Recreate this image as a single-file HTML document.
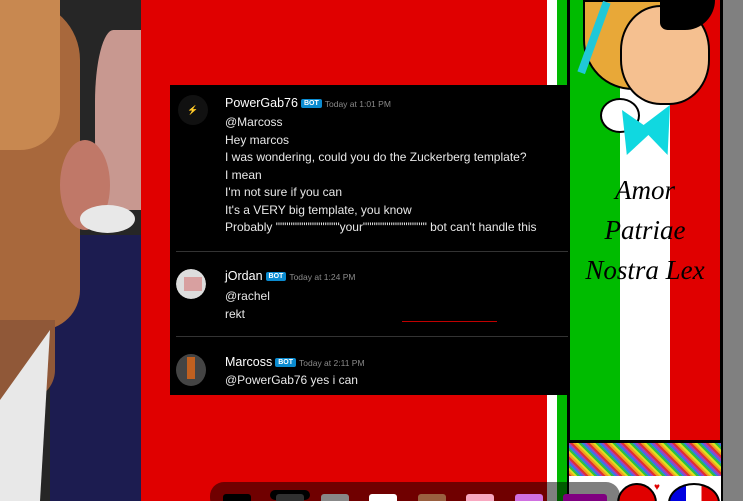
<!DOCTYPE html>
<html><head><style>
*{margin:0;padding:0;box-sizing:border-box}
html,body{width:743px;height:501px;overflow:hidden}
body{position:relative;background:#e00000;font-family:"Liberation Sans",sans-serif}
div{position:absolute}
.t{color:#e8e8e8;font-size:12px;left:55px;white-space:nowrap}
.n{color:#fff;font-size:12.5px}
.b{background:#0b8bd0;color:#fff;font-size:7px;font-weight:bold;padding:1px 3px;border-radius:2px;display:inline-block;vertical-align:2px;margin-left:3px}
.ts{color:#8a8a8a;font-size:8.5px;margin-left:3px}
.sw{top:494px;height:10px;width:28px;border-radius:3px}
</style></head><body>
<!-- photo -->
<div style="left:0;top:0;width:141px;height:501px;background:#262626"></div>
<div style="left:95px;top:30px;width:46px;height:180px;background:#c89890;border-radius:40% 0 0 40%"></div>
<div style="left:50px;top:235px;width:91px;height:266px;background:#1c1c50"></div>
<div style="left:0;top:0;width:80px;height:330px;background:#a8683c;border-radius:0 60px 40px 0"></div>
<div style="left:0;top:0;width:60px;height:150px;background:#c88850;border-radius:0 0 40px 0"></div>
<div style="left:0;top:320px;width:55px;height:80px;background:#905838;border-radius:0 0 30px 0"></div>
<div style="left:60px;top:140px;width:50px;height:90px;background:#c07868;border-radius:50%"></div>
<div style="left:0;top:330px;width:50px;height:171px;background:#e8e8e8;clip-path:polygon(50px 0,40px 171px,0 171px,0 70px)"></div>
<div style="left:80px;top:205px;width:55px;height:28px;background:#e8e8e8;border-radius:50%"></div>
<!-- flag strips -->
<div style="left:540px;top:0;width:7px;height:501px;background:#e00000"></div>
<div style="left:547px;top:0;width:10px;height:501px;background:#fff"></div>
<div style="left:557px;top:0;width:10px;height:501px;background:#00b800"></div>
<div style="left:567px;top:0;width:3px;height:501px;background:#000"></div>
<!-- right panel -->
<div style="left:570px;top:0;width:50px;height:442px;background:#00bb00"></div>
<div style="left:620px;top:0;width:50px;height:442px;background:#fff"></div>
<div style="left:670px;top:0;width:50px;height:442px;background:#e00000"></div>
<div style="left:720px;top:0;width:3px;height:501px;background:#000"></div>
<div style="left:723px;top:0;width:20px;height:501px;background:#808080"></div>
<div style="left:569px;top:440px;width:152px;height:3px;background:#000"></div>
<div style="left:569px;top:443px;width:152px;height:33px;background:repeating-linear-gradient(45deg,#e03030 0 2px,#f0a020 2px 4px,#e0e020 4px 6px,#30c040 6px 8px,#3080e0 8px 10px,#a040c0 10px 12px)"></div>
<div style="left:569px;top:476px;width:152px;height:25px;background:#fff"></div>
<div style="left:617px;top:483px;width:40px;height:40px;border-radius:50%;background:#e00000;border:2px solid #000"></div>
<div style="left:668px;top:483px;width:52px;height:40px;border-radius:50%;background:linear-gradient(90deg,#0000e0 0 33%,#fff 33% 66%,#e00000 66%);border:2px solid #000"></div>
<div style="left:654px;top:482px;color:#e00000;font-size:10px">♥</div>
<!-- pinocchio -->
<div style="left:583px;top:0;width:85px;height:90px;background:#e8a838;border-radius:0 0 30px 50px;border:2px solid #000"></div>
<div style="left:590px;top:0;width:8px;height:75px;background:#20c8d8;transform:rotate(20deg)"></div>
<div style="left:620px;top:5px;width:90px;height:100px;background:#f5c090;border-radius:45%;border:2px solid #000"></div>
<div style="left:660px;top:0;width:55px;height:30px;background:#000;border-radius:0 0 40px 10px"></div>
<div style="left:600px;top:98px;width:40px;height:35px;background:#fff;border-radius:50%;border:2px solid #000"></div>
<div style="left:622px;top:105px;width:48px;height:50px;background:#10d8e0;clip-path:polygon(0 10%,45% 40%,100% 0,95% 100%,55% 60%,10% 100%);"></div>
<div style="left:570px;top:170px;width:150px;text-align:center;font-family:'Liberation Serif',serif;font-style:italic;font-size:27px;line-height:40px;color:#000">Amor<br>Patriae<br>Nostra Lex</div>
<!-- chat -->
<div style="left:170px;top:85px;width:398px;height:310px;background:#000">
<div style="left:8px;top:10px;width:30px;height:30px;border-radius:50%;background:#111;color:#e8e000;font-size:9px;font-weight:bold;text-align:center;line-height:30px">⚡</div>
<div class="t" style="top:11px"><span class="n">PowerGab76</span><span class="b">BOT</span><span class="ts">Today at 1:01 PM</span></div>
<div class="t" style="top:29px;line-height:17.5px">@Marcoss<br>Hey marcos<br>I was wondering, could you do the Zuckerberg template?<br>I mean<br>I'm not sure if you can<br>It's a VERY big template, you know<br>Probably """""""""""""""your""""""""""""""" bot can't handle this</div>
<div style="left:6px;top:166px;width:392px;height:1px;background:#333"></div>
<div style="left:6px;top:184px;width:30px;height:30px;border-radius:50%;background:#ddd;clip-path:circle(50%)"></div>
<div style="left:14px;top:192px;width:18px;height:14px;background:#d8a0a0"></div>
<div class="t" style="top:184px"><span class="n">jOrdan</span><span class="b">BOT</span><span class="ts">Today at 1:24 PM</span></div>
<div class="t" style="top:203px;line-height:17.5px">@rachel<br>rekt</div>
<div style="left:232px;top:236px;width:95px;height:1px;background:#c00000"></div>
<div style="left:6px;top:251px;width:392px;height:1px;background:#333"></div>
<div style="left:6px;top:269px;width:30px;height:32px;border-radius:50%;background:#444"></div>
<div style="left:17px;top:272px;width:8px;height:22px;background:#c06020"></div>
<div class="t" style="top:270px"><span class="n">Marcoss</span><span class="b">BOT</span><span class="ts">Today at 2:11 PM</span></div>
<div class="t" style="top:288px">@PowerGab76 yes i can</div>
</div>
<!-- bottom toolbar -->
<div style="left:210px;top:482px;width:410px;height:30px;border-radius:14px;background:rgba(0,0,0,0.5)"></div>
<div class="sw" style="left:223px;background:#000"></div>
<div class="sw" style="left:270px;width:40px;top:490px;background:#000;border-radius:8px"></div>
<div class="sw" style="left:276px;background:#303030"></div>
<div class="sw" style="left:321px;background:#888"></div>
<div class="sw" style="left:369px;background:#fff"></div>
<div class="sw" style="left:418px;background:#9a6040"></div>
<div class="sw" style="left:466px;background:#f8a8c0"></div>
<div class="sw" style="left:515px;background:#d070e0"></div>
<div class="sw" style="left:563px;width:44px;background:#800080"></div>
</body></html>
